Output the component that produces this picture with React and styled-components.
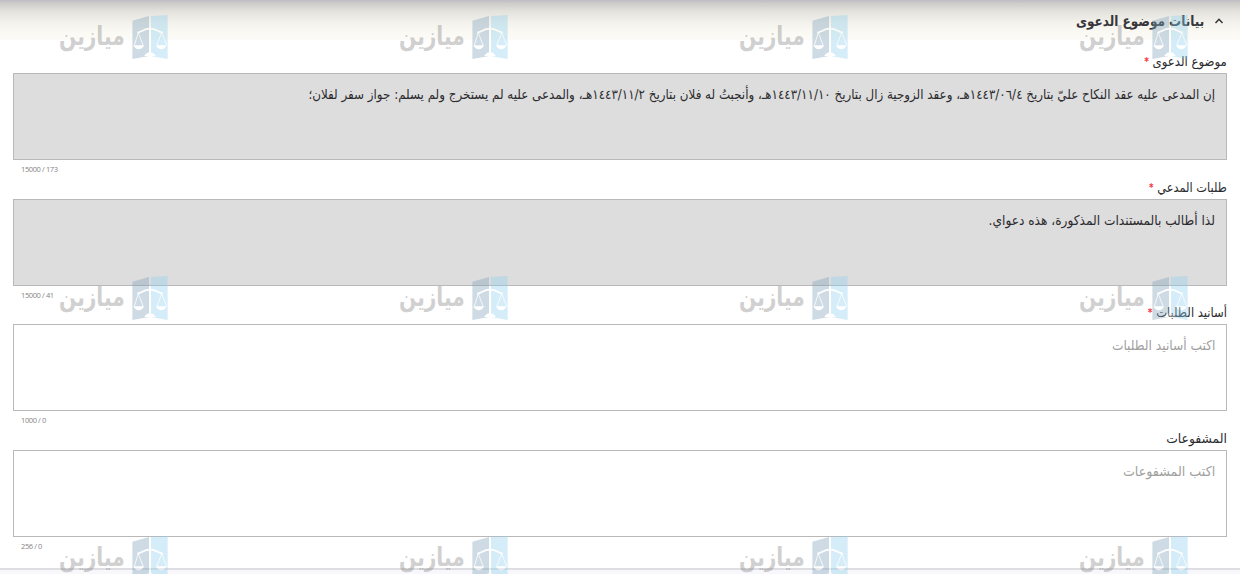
import React from 'react';
import styled, { createGlobalStyle } from 'styled-components';

const fields = [
    {
        label: 'موضوع الدعوى',
        labelScale: 0.9,
        required: true,
        filled: true,
        text: 'إن المدعى عليه عقد النكاح عليّ بتاريخ ١٤٤٣/٠٦/٤هـ، وعقد الزوجية زال بتاريخ ١٤٤٣/١١/١٠هـ، وأنجبتُ له فلان بتاريخ ١٤٤٣/١١/٢هـ، والمدعى عليه لم يستخرج ولم يسلم: جواز سفر لفلان؛',
        textScale: 0.881,
        count: '15000 / 173',
    },
    {
        label: 'طلبات المدعي',
        labelScale: 0.876,
        required: true,
        filled: true,
        text: 'لذا أطالب بالمستندات المذكورة، هذه دعواي.',
        textScale: 0.902,
        count: '15000 / 41',
    },
    {
        label: 'أسانيد الطلبات',
        labelScale: 0.89,
        required: true,
        text: 'اكتب أسانيد الطلبات',
        textScale: 0.905,
        count: '1000 / 0',
    },
    {
        label: 'المشفوعات',
        labelScale: 0.95,
        text: 'اكتب المشفوعات',
        textScale: 0.94,
        count: '256 / 0',
    },
];

const Scales = () => (
    <Logo viewBox="0 0 36 46">
        <path d="M0 6 L17 1 V42 L0 45 Z" fill="#7fa3bd" />
        <path d="M19 1 L36 0 V45 L19 42 Z" fill="#8fd0ee" />
        <g fill="none" stroke="#fff" strokeWidth="1.2">
            <path d="M18 12 V41" strokeWidth="1.8" />
            <path d="M5 18 C9 18 11 14 18 14 C25 14 27 18 31 18" strokeWidth="1.8" />
            <path d="M6 18 L2 31 M6 18 L11 31 M30 18 L25 31 M30 18 L35 31" strokeWidth="0.8" />
        </g>
        <path d="M1 31 H12 Q10 35 6.500 35 Q3 35 1 31 Z M24 31 H35 Q33 35 29.500 35 Q26 35 24 31 Z M12 42 Q14 38 18 38 Q22 38 24 42 Z" fill="#fff" />
    </Logo>
);

const App = () => {
    return (
        <Container>
            <GlobalStyle />
            <Header>
                <Chevron viewBox="0 0 10 8">
                    <path d="M1.500 6 L5 2.300 L8.500 6" />
                </Chevron>
                <Title>
                    <Fit scale={0.86}>بيانات موضوع الدعوى</Fit>
                </Title>
            </Header>
            <Form>
                {fields.map(field => (
                    <Field key={field.label}>
                        <Label>
                            <Fit scale={field.labelScale}>
                                {field.label} {field.required && <Star>*</Star>}
                            </Fit>
                        </Label>
                        <Box $filled={field.filled}>
                            <Fit scale={field.textScale}>{field.text}</Fit>
                        </Box>
                        <Count>{field.count}</Count>
                    </Field>
                ))}
            </Form>
            <Bottom />
            <Watermarks>
                {Array.from({ length: 12 }, (_, i) => (
                    <Mark key={i}>
                        <Scales />
                        <MarkText>
                            <Fit scale={0.775}>ميازين</Fit>
                        </MarkText>
                    </Mark>
                ))}
            </Watermarks>
        </Container>
    );
};

const GlobalStyle = createGlobalStyle`
    * {
        box-sizing: border-box;
    }
    body {
        margin: 0;
        background: #fff;
    }
`;

const Container = styled.div`
    position: relative;
    display: flex;
    flex-direction: column;
    width: 1240px;
    height: 574px;
    overflow: hidden;
    direction: rtl;
    color: #2b2b2f;
    font-family: "DejaVu Sans", sans-serif;
`;

const Header = styled.div`
    display: flex;
    align-items: center;
    height: 40px;
    padding: 0 16px 0 0;
    border-top: 2px solid #c3c1c8;
    background: linear-gradient(#cbc9c6, #e4e2dd 25%, #f4f2ec 55%, #faf9f4 80%, #fcfbf7);
`;

const Chevron = styled.svg`
    width: 10px;
    height: 8px;
    margin-left: 10px;
    fill: none;
    stroke: #333;
    stroke-width: 1.5;
`;

const Title = styled.h2`
    margin: 0;
    color: #37373b;
    font-size: 14px;
    line-height: 20px;
`;

const Fit = styled.span.withConfig({ shouldForwardProp: prop => prop !== 'scale' })`
    display: inline-block;
    white-space: nowrap;
    transform: scaleX(${props => props.scale});
    transform-origin: right;
`;

const Form = styled.div`
    padding: 12px 13px 0;
`;

const Field = styled.div`
    height: 125.5px;
`;

const Label = styled.div`
    height: 21px;
    font-size: 13px;
    line-height: 20px;
`;

const Star = styled.span`
    position: relative;
    top: -1px;
    color: #f5333d;
    font-size: 10px;
    font-weight: 700;
`;

const Box = styled.div`
    height: 87px;
    padding: 9px 11px;
    border: 1px solid #b9b9b9;
    background: ${props => props.$filled ? '#ddd' : '#fff'};
    color: ${props => props.$filled ? '#2b2b2f' : '#a0a0a0'};
    font-size: 13.5px;
    line-height: 22px;
`;

const Count = styled.div`
    padding: 4px 8px 0;
    direction: ltr;
    color: #858585;
    font-family: "Open Sans", sans-serif;
    font-size: 7.5px;
    letter-spacing: -0.4px;
    line-height: 10px;
`;

const Bottom = styled.div`
    flex: none;
    height: 6px;
    margin-top: auto;
    border-top: 2px solid #dedee2;
    background: #f8f8fc;
`;

const Watermarks = styled.div`
    position: absolute;
    top: 15px;
    left: 59px;
    display: grid;
    grid-template-columns: repeat(4, 109px);
    grid-auto-rows: 45px;
    column-gap: 231px;
    row-gap: 215.5px;
    opacity: 0.38;
    pointer-events: none;
`;

const Mark = styled.div`
    display: flex;
    align-items: center;
    gap: 7px;
`;

const Logo = styled.svg`
    flex: none;
    width: 36px;
    height: 45px;
`;

const MarkText = styled.div`
    width: 66px;
    padding-bottom: 3px;
    color: #858585;
    font-size: 26px;
    font-weight: 700;
    line-height: 40px;
`;

export default App;
